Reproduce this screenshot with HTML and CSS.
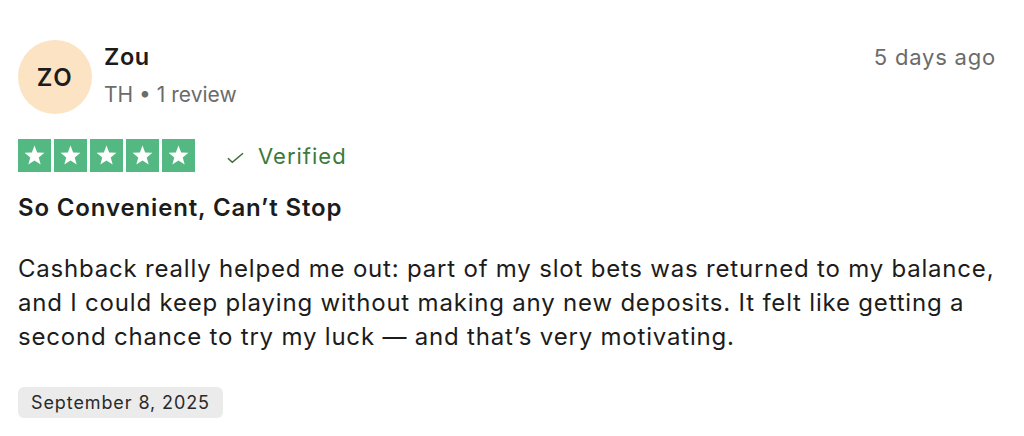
FILE: index.html
```html
<!DOCTYPE html>
<html>
<head>
<meta charset="utf-8">
<link rel="stylesheet" href="styles.css">
</head>
<body>
<article class="review">
  <header class="review-head">
    <div class="avatar">ZO</div>
    <div class="user">
      <div class="user-name">Zou</div>
      <div class="user-meta">TH • 1 review</div>
    </div>
    <time class="ago">5 days ago</time>
  </header>
  <div class="rating-row">
    <div class="stars">
      <span class="star"><svg viewBox="0 0 24 24"><path d="M12 3.2l2.35 6.1 6.5.3-5.07 4.1 1.73 6.3L12 16.4l-5.51 3.6 1.73-6.3L3.15 9.6l6.5-.3z"/></svg></span>
      <span class="star"><svg viewBox="0 0 24 24"><path d="M12 3.2l2.35 6.1 6.5.3-5.07 4.1 1.73 6.3L12 16.4l-5.51 3.6 1.73-6.3L3.15 9.6l6.5-.3z"/></svg></span>
      <span class="star"><svg viewBox="0 0 24 24"><path d="M12 3.2l2.35 6.1 6.5.3-5.07 4.1 1.73 6.3L12 16.4l-5.51 3.6 1.73-6.3L3.15 9.6l6.5-.3z"/></svg></span>
      <span class="star"><svg viewBox="0 0 24 24"><path d="M12 3.2l2.35 6.1 6.5.3-5.07 4.1 1.73 6.3L12 16.4l-5.51 3.6 1.73-6.3L3.15 9.6l6.5-.3z"/></svg></span>
      <span class="star"><svg viewBox="0 0 24 24"><path d="M12 3.2l2.35 6.1 6.5.3-5.07 4.1 1.73 6.3L12 16.4l-5.51 3.6 1.73-6.3L3.15 9.6l6.5-.3z"/></svg></span>
    </div>
    <div class="verified">
      <svg class="check" viewBox="0 0 18 12"><path d="M1 6.2l4.6 4.3L17 1"/></svg>
      <span>Verified</span>
    </div>
  </div>
  <h2 class="title">So Convenient, Can’t Stop</h2>
  <p class="body">Cashback really helped me out: part of my slot bets was returned to my balance, and I could keep playing without making any new deposits. It felt like getting a second chance to try my luck — and that’s very motivating.</p>
  <div class="date-pill">September 8, 2025</div>
</article>
</body>
</html>
```
FILE: styles.css
```css
* { box-sizing: border-box; }
html, body { margin: 0; padding: 0; background: #ffffff; }
body { font-family: Inter, "Noto Sans", sans-serif; color: #1c1c1c; }

.review { padding: 40px 8px 0 18px; }

.review-head { display: flex; align-items: flex-start; padding-right: 20px; }

.avatar {
  width: 74px; height: 74px; border-radius: 50%;
  background: #fbe3c3;
  display: flex; align-items: center; justify-content: center;
  font-size: 24px; font-weight: 600; color: #1c1c1c;
  letter-spacing: 1.5px;
  flex: none;
}

.user { margin-left: 12px; padding-top: 3px; flex: 1; }
.user-name { font-size: 23.5px; font-weight: 600; line-height: 28px; color: #1c1c1c; letter-spacing: 0.6px; }
.user-meta { font-size: 21px; line-height: 28px; margin-top: 10px; color: #6b6b6b; }

.ago { font-size: 22px; line-height: 28px; color: #6b6b6b; padding-top: 3px; letter-spacing: 0.8px; }

.rating-row { display: flex; align-items: center; margin-top: 25px; }
.stars { display: flex; gap: 3px; }
.star {
  width: 33px; height: 33px; background: #54b882;
  display: flex; align-items: center; justify-content: center;
}
.star svg { width: 27px; height: 27px; fill: #ffffff; }

.verified { display: flex; align-items: center; margin-left: 32px; color: #3a7a3c; font-size: 22px; letter-spacing: 1px; }
.check { width: 17px; height: 12px; fill: none; stroke: #3b6b3b; stroke-width: 1.6; margin-right: 14px; margin-top: 4px; }

.title { margin: 22px 0 0; font-size: 24px; font-weight: 600; line-height: 28px; color: #1c1c1c; letter-spacing: 0.85px; }

.body { margin: 30px 0 0; font-size: 24px; line-height: 34px; color: #1c1c1c; letter-spacing: 0.8px; }

.date-pill {
  display: inline-block; margin-top: 33px;
  background: #ebebeb; border-radius: 6px;
  padding: 4px 13px; font-size: 18px; line-height: 23px; color: #2a2a2a; letter-spacing: 0.9px;
}
```
